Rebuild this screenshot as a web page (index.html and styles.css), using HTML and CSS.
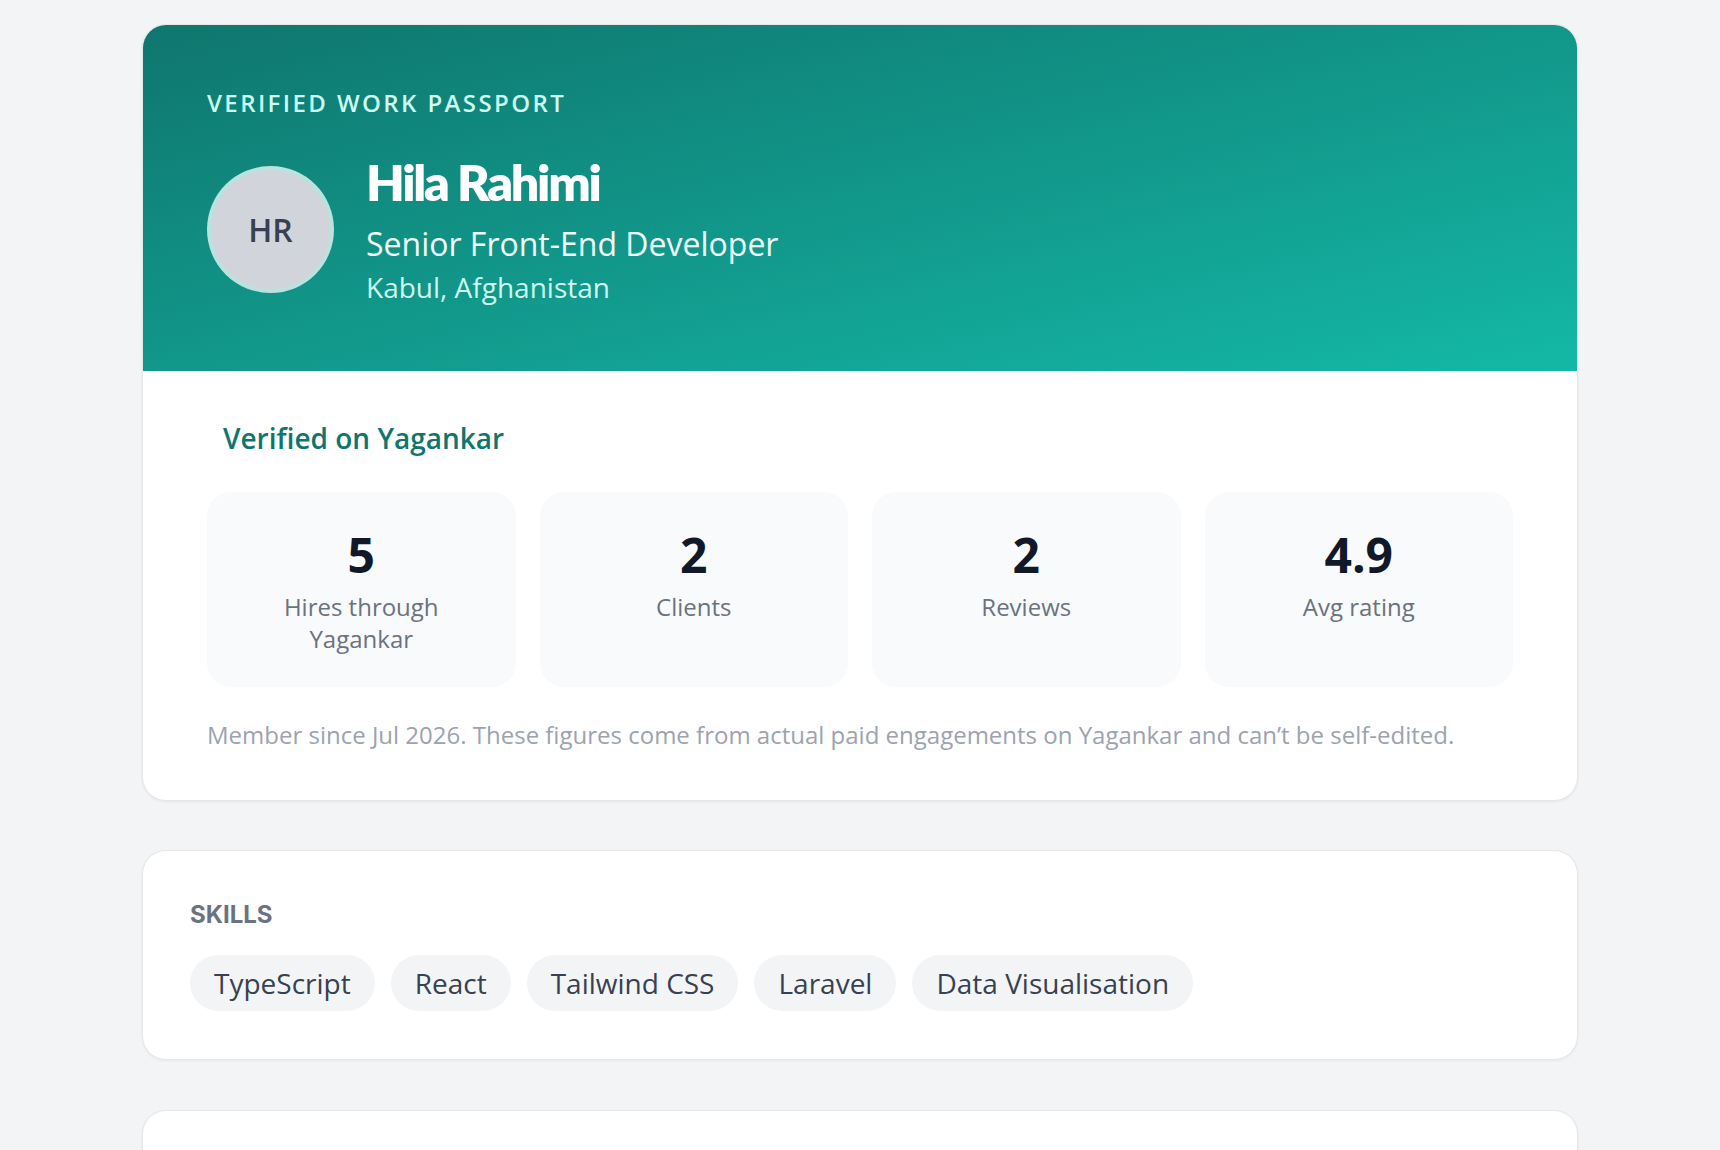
FILE: index.html
```html
<!DOCTYPE html>
<html lang="en">
<head>
  <meta charset="UTF-8">
  <meta name="viewport" content="width=device-width, initial-scale=1.0">
  <title>Hila Rahimi · Work Passport</title>
  <link rel="stylesheet" href="styles.css">
</head>
<body>
  <main class="page">
    <section class="card passport">
      <header class="passport-head">
        <div class="eyebrow">Verified Work Passport</div>
        <div class="identity">
          <div class="avatar">HR</div>
          <div class="who">
            <h1 class="name">Hila Rahimi</h1>
            <div class="role">Senior Front-End Developer</div>
            <div class="place">Kabul, Afghanistan</div>
          </div>
        </div>
      </header>

      <div class="passport-body">
        <h2 class="verified">Verified on Yagankar</h2>
        <div class="stats">
          <div class="stat">
            <div class="stat-value">5</div>
            <div class="stat-label">Hires through Yagankar</div>
          </div>
          <div class="stat">
            <div class="stat-value">2</div>
            <div class="stat-label">Clients</div>
          </div>
          <div class="stat">
            <div class="stat-value">2</div>
            <div class="stat-label">Reviews</div>
          </div>
          <div class="stat">
            <div class="stat-value">4.9</div>
            <div class="stat-label">Avg rating</div>
          </div>
        </div>
        <p class="footnote">Member since Jul 2026. These figures come from actual paid engagements on Yagankar and can’t be self-edited.</p>
      </div>
    </section>

    <section class="card section">
      <h3 class="section-title">Skills</h3>
      <ul class="tags">
        <li class="tag">TypeScript</li>
        <li class="tag">React</li>
        <li class="tag">Tailwind CSS</li>
        <li class="tag">Laravel</li>
        <li class="tag">Data Visualisation</li>
      </ul>
    </section>

    <section class="card section section-tall"></section>
  </main>
</body>
</html>
```

FILE: styles.css
```css
body {
  margin: 0;
  background: #f3f4f6;
  font-family: 'Open Sans', 'Noto Sans', sans-serif;
  color: #111827;
}
.page {
  width: 1436px;
  margin: 0 auto;
  padding: 24px 0;
  display: flex;
  flex-direction: column;
  gap: 49px;
}
.card {
  background: #ffffff;
  border: 1px solid #e5e7eb;
  border-radius: 24px;
  box-shadow: 0 1px 3px rgba(0, 0, 0, 0.06);
  overflow: hidden;
}

/* header band */
.passport-head {
  background: linear-gradient(to bottom right, #0f766e, #14b8a6);
  padding: 60px 64px 65px;
  color: #ffffff;
}
.eyebrow {
  font-size: 24px;
  line-height: 36px;
  font-weight: 600;
  letter-spacing: 0.1em;
  text-transform: uppercase;
  color: #ccfbf1;
}
.identity {
  display: flex;
  align-items: center;
  gap: 32px;
  margin-top: 31px;
}
.avatar {
  width: 119px;
  height: 119px;
  border-radius: 50%;
  border: 4px solid rgba(153, 246, 228, 0.4);
  background: #d1d5db;
  color: #374151;
  font-size: 32px;
  font-weight: 600;
  display: flex;
  align-items: center;
  justify-content: center;
  flex-shrink: 0;
}
.name {
  margin: 0;
  font-family: 'Lato', sans-serif;
  font-size: 50px;
  line-height: 60px;
  font-weight: 800;
  letter-spacing: -0.045em;
}
.role {
  margin-top: 10px;
  font-size: 32px;
  line-height: 44px;
  color: #f0fdfa;
}
.place {
  margin-top: 2px;
  font-size: 28px;
  line-height: 38px;
  color: #ccfbf1;
}

/* verified figures */
.passport-body {
  padding: 48px 64px 47px;
}
.verified {
  margin: 0 0 0 16px;
  font-size: 28px;
  line-height: 39px;
  font-weight: 600;
  color: #0f766e;
}
.stats {
  display: grid;
  grid-template-columns: repeat(4, 1fr);
  gap: 24px;
  margin-top: 34px;
}
.stat {
  background: #f9fafb;
  border-radius: 24px;
  padding: 34px 24px 32px;
  text-align: center;
}
.stat-value {
  font-size: 48px;
  line-height: 58px;
  font-weight: 700;
  color: #111827;
}
.stat-label {
  margin-top: 7px;
  font-size: 24px;
  line-height: 32px;
  color: #6b7280;
}
.footnote {
  margin: 30px 0 0;
  font-size: 24px;
  line-height: 36px;
  color: #9ca3af;
}

/* skills and other sections */
.section {
  padding: 46px 47px 48px;
}
.section + .section {
  margin-top: 1px;
}
.section-tall {
  min-height: 200px;
}
.section-title {
  margin: 0;
  font-family: 'Inter', sans-serif;
  font-size: 24px;
  line-height: 36px;
  font-weight: 700;
  text-transform: uppercase;
  color: #6b7280;
}
.tags {
  list-style: none;
  margin: 22px 0 0;
  padding: 0;
  display: flex;
  flex-wrap: wrap;
  gap: 16px;
}
.tag {
  background: #f3f4f6;
  color: #374151;
  font-size: 28px;
  line-height: 42px;
  padding: 7px 24px;
  border-radius: 999px;
}
```
